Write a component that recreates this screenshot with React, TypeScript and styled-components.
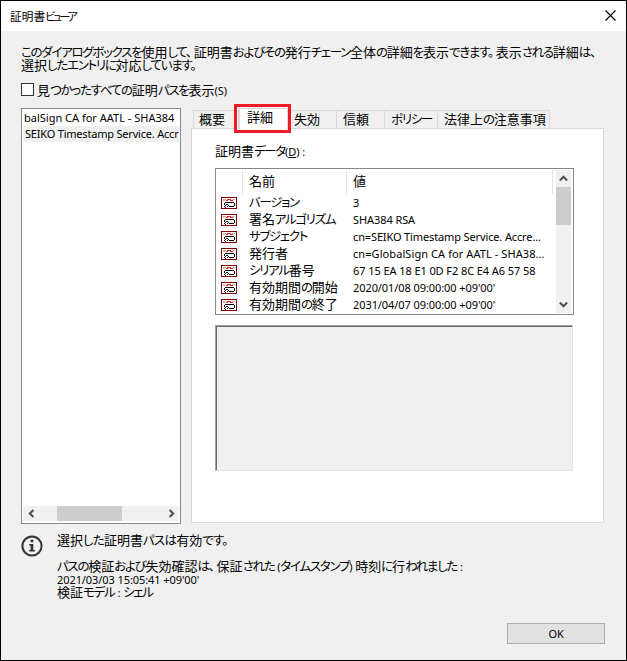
import React from "react";
import styled, { createGlobalStyle } from "styled-components";

const Global = createGlobalStyle`
  *, *::before, *::after { box-sizing: border-box; }
  body { margin: 0; }
`;

const Window = styled.div`
  width: 627px;
  height: 661px;
  border: 1px solid #000;
  background: #f0f0f0;
  color: #000;
  font: 13px/13px "Noto Sans CJK JP", sans-serif;
  display: flex;
  flex-direction: column;
  overflow: hidden;
`;

const Line = styled.div<{ $size?: number }>`
  font-size: ${(p) => p.$size ?? 13}px;
  line-height: 13px;
  height: 13px;
  white-space: pre;
`;

const Kana = styled.span<{ $track: number }>`
  font-size: 0.96em;
  line-height: 1px;
  font-feature-settings: "palt";
  letter-spacing: ${(p) => p.$track}px;
`;

const Stop = styled(Kana)`
  margin-right: 3px;
`;

const Latin = styled.span<{ $track?: number }>`
  font-family: "Noto Sans", "Open Sans", sans-serif;
  font-size: 11px;
  line-height: 1px;
  letter-spacing: ${(p) => p.$track ?? -0.08}px;
`;

/* Kanji keep their full width, kana are set narrower, Latin uses the UI face. */
function Text({ children, track = -1.2 }: { children: string; track?: number }) {
  const runs = children.match(/[、。]|[\u3003-\u30ff]+|[\u4e00-\u9fff]+|[^\u3000-\u30ff\u4e00-\u9fff]+/g) ?? [];
  return (
    <>
      {runs.map((run, i) => {
        if (/[、。]/.test(run)) return <Stop key={i} $track={track}>{run}</Stop>;
        if (/[\u3000-\u30ff]/.test(run)) return <Kana key={i} $track={track}>{run}</Kana>;
        if (/[\u4e00-\u9fff]/.test(run)) return <span key={i}>{run}</span>;
        return <Latin key={i}>{run}</Latin>;
      })}
    </>
  );
}

const TitleBar = styled.header`
  flex: none;
  height: 30px;
  background: #fff;
  display: flex;
  align-items: center;
  justify-content: space-between;
  padding: 0 10px 1px 9px;
`;

const Body = styled.main`
  flex: 1;
  padding: 14px 21px 16px 20px;
  display: flex;
  flex-direction: column;
`;

const CheckRow = styled.label`
  display: flex;
  align-items: center;
  gap: 3px;
  height: 13px;
  margin-top: 12px;
`;

const CheckBox = styled.span`
  width: 13px;
  height: 13px;
  border: 1px solid #333;
  background: #fff;
`;

const Columns = styled.div`
  display: flex;
  gap: 10px;
  margin-top: 8px;
  height: 420px;
  padding-top: 4px;
`;

const Tree = styled.div`
  flex: none;
  width: 160px;
  height: 416px;
  border: 1px solid #828790;
  background: #fff;
  padding: 1px 1px 2px;
  display: flex;
  flex-direction: column;
`;

const TreeRow = styled.div<{ $selected?: boolean }>`
  height: 16px;
  line-height: 14px;
  padding-left: ${(p) => (p.$selected ? 2 : 1)}px;
  background: ${(p) => (p.$selected ? "#f0f0f0" : "#fff")};
  white-space: nowrap;
  overflow: hidden;
`;

const HScroll = styled.div`
  margin-top: auto;
  height: 15px;
  background: #f0f0f0;
  display: flex;
  align-items: center;
`;

const HThumb = styled.div`
  width: 65px;
  height: 15px;
  margin-left: 18px;
  margin-right: auto;
  background: #cdcdcd;
`;

const TabArea = styled.div`
  flex: none;
  width: 413px;
  display: flex;
  flex-direction: column;
`;

const Tabs = styled.div`
  display: flex;
  align-items: flex-end;
  height: 20px;
  padding-left: 2px;
`;

const Tab = styled.div<{ $w: number; $active?: boolean; $first?: boolean }>`
  position: relative;
  z-index: ${(p) => (p.$active ? 1 : 0)};
  flex: none;
  width: ${(p) => p.$w}px;
  height: ${(p) => (p.$active ? 21 : 18)}px;
  margin-bottom: ${(p) => (p.$active ? -1 : 0)}px;
  border: 1px solid #d9d9d9;
  border-bottom: 0;
  border-left-width: ${(p) => (p.$first || p.$active ? 1 : 0)}px;
  background: ${(p) => (p.$active ? "#fff" : "#f0f0f0")};
  padding-top: 1px;
  padding-left: ${(p) => (p.$active ? 7 : p.$first ? 5 : 6)}px;
`;

const Highlight = styled.div`
  position: absolute;
  left: -6px;
  top: -5px;
  width: 57px;
  height: 29px;
  border: 3px solid #ed1c24;
`;

const Panel = styled.section`
  height: 395px;
  border: 1px solid #d9d9d9;
  background: #fff;
  padding: 15px 0 0 23px;
`;

const DataList = styled.div`
  width: 359px;
  height: 147px;
  margin-top: 11px;
  border: 1px solid #828790;
  padding: 1px 2px 1px 1px;
  display: flex;
`;

const Grid = styled.div`
  width: 339px;
`;

const HeaderRow = styled.div`
  display: grid;
  grid-template-columns: 26px 104px 206px;
  height: 24px;
`;

const HeaderCell = styled.div`
  border-right: 1px solid #e5e5e5;
  padding: 4px 0 0 6px;
`;

const DataRow = styled.div`
  display: grid;
  grid-template-columns: 31px 104px 1fr;
  height: 17px;
  align-items: start;
  padding: 1px 0 0 1px;
`;

const IconCell = styled.div`
  height: 14px;
  padding: 2px 0 0 3px;
`;

const VScroll = styled.div`
  width: 15px;
  height: 143px;
  background: #f0f0f0;
  display: flex;
  flex-direction: column;
  align-items: center;
`;

const VThumb = styled.div`
  width: 15px;
  height: 38px;
  margin-bottom: auto;
  background: #cdcdcd;
`;

const ArrowBox = styled.div`
  width: 16px;
  height: 17px;
  display: flex;
  align-items: center;
  justify-content: center;
`;

const Detail = styled.div`
  width: 358px;
  height: 146px;
  margin-top: 10px;
  background: #f0f0f0;
  border: 1px solid #e3e3e3;
  border-top-color: #a0a0a0;
  border-left-color: #a0a0a0;
  box-shadow: inset 1px 1px #696969;
`;

const Status = styled.div`
  display: flex;
  gap: 14px;
  margin-top: 9px;
`;

const InfoSvg = styled.svg`
  flex: none;
  display: block;
  margin-top: 2px;
`;

const Messages = styled.div`
  display: flex;
  flex-direction: column;
`;

const Gap = styled.div`
  height: 13px;
`;

const OkButton = styled.button`
  width: 98px;
  height: 21px;
  margin: auto 0 0 auto;
  padding: 0;
  border: 1px solid #adadad;
  background: #e1e1e1;
  color: #000;
  line-height: 18px;
`;

function Arrow({ rotate }: { rotate: number }) {
  return (
    <svg width="9" height="9" viewBox="0 0 9 9">
      <path d="M.9 6.4 4.5 2.8 8.1 6.4" fill="none" stroke="#505050" strokeWidth="2.1" transform={`rotate(${rotate} 4.5 4.5)`} />
    </svg>
  );
}

function CertIcon() {
  return (
    <svg width="16" height="12" viewBox="0 0 16 12" shapeRendering="crispEdges" display="block">
      <path d="M0 0h16v12H0z" fill="#800000" />
      <path d="M1 1h14v10H1z" fill="#fff" />
      <path d="M2 2h3v1H2zM11 2h3v1h-3zM2 3h2v1H2z" fill="#b8b8b8" />
      <path d="M6 2h4v1H6zM5 3h2v1H5zM9 3h3v1H9z" fill="#f02020" />
      <path d="M4 5h9v1H4zM3 6h1v2H3zM13 6h1v3h-1zM8 9h5v1H8zM5 7h2v1H5zM7 8h1v1H7zM4 8h1v1H4zM3 9h1v1H3zM6 9h1v1H6zM4 10h1v1H4z" fill="#000" />
    </svg>
  );
}

const tabs = [
  { label: "概要", w: 46 },
  { label: "詳細", w: 49, active: true },
  { label: "失効", w: 49 },
  { label: "信頼", w: 48 },
  { label: "ポリシー", w: 53 },
  { label: "法律上の注意事項", w: 112 },
];

const rows = [
  { name: "バージョン", value: "3" },
  { name: "署名アルゴリズム", value: "SHA384 RSA" },
  { name: "サブジェクト", value: "cn=SEIKO Timestamp Service. Accre...", track: -0.13 },
  { name: "発行者", value: "cn=GlobalSign CA for AATL - SHA38...", track: 0.08 },
  { name: "シリアル番号", value: "67 15 EA 18 E1 0D F2 8C E4 A6 57 58" },
  { name: "有効期間の開始", value: "2020/01/08 09:00:00 +09'00'" },
  { name: "有効期間の終了", value: "2031/04/07 09:00:00 +09'00'" },
];

export default function App() {
  return (
    <Window>
      <Global />
      <TitleBar>
        <Line $size={11.7}><Text track={-2.7}>証明書ビューア</Text></Line>
        <svg width="11" height="11" viewBox="0 0 11 11">
          <path d="M.5.5l10 10M10.5.5l-10 10" stroke="#000" strokeWidth="1.1" />
        </svg>
      </TitleBar>
      <Body>
        <Line><Text track={-1.27}>このダイアログボックスを使用して、証明書およびその発行チェーン全体の詳細を表示できます。表示される詳細は、</Text></Line>
        <Line><Text track={-1.25}>選択したエントリに対応しています。</Text></Line>
        <CheckRow>
          <CheckBox />
          <Line><Text track={-1.25}>見つかったすべての証明パスを表示(S)</Text></Line>
        </CheckRow>
        <Columns>
          <Tree>
            <TreeRow><Latin $track={0}>balSign CA for AATL - SHA384</Latin></TreeRow>
            <TreeRow $selected><Latin $track={-0.2}>SEIKO Timestamp Service. Accr</Latin></TreeRow>
            <HScroll>
              <ArrowBox><Arrow rotate={-90} /></ArrowBox>
              <HThumb />
              <ArrowBox><Arrow rotate={90} /></ArrowBox>
            </HScroll>
          </Tree>
          <TabArea>
            <Tabs>
              {tabs.map((t, i) => (
                <Tab key={t.label} $w={t.w} $active={t.active} $first={i === 0}>
                  <Line><Text>{t.label}</Text></Line>
                  {t.active && <Highlight />}
                </Tab>
              ))}
            </Tabs>
            <Panel>
              <Line><Text track={-1.3}>証明書データ</Text><Latin>(<u>D</u>) :</Latin></Line>
              <DataList>
                <Grid>
                  <HeaderRow>
                    <HeaderCell />
                    <HeaderCell><Line>名前</Line></HeaderCell>
                    <HeaderCell><Line>値</Line></HeaderCell>
                  </HeaderRow>
                  {rows.map(({ name, value, track }) => (
                    <DataRow key={name}>
                      <IconCell><CertIcon /></IconCell>
                      <Line><Text track={-1.3}>{name}</Text></Line>
                      <Line><Latin $track={track}>{value}</Latin></Line>
                    </DataRow>
                  ))}
                </Grid>
                <VScroll>
                  <ArrowBox><Arrow rotate={0} /></ArrowBox>
                  <VThumb />
                  <ArrowBox><Arrow rotate={180} /></ArrowBox>
                </VScroll>
              </DataList>
              <Detail />
            </Panel>
          </TabArea>
        </Columns>
        <Status>
          <InfoSvg width="22" height="22" viewBox="0 0 22 22">
            <circle cx="11" cy="11" r="9.6" fill="none" stroke="#333" strokeWidth="2" />
            <path d="M9.6 4.8h2.7v2.5H9.6zM8.2 9h4.1v6h1.5v1.5H8.2V15h1.4v-4.6H8.2z" fill="#333" />
          </InfoSvg>
          <Messages>
            <Line><Text track={-0.75}>選択した証明書パスは有効です。</Text></Line>
            <Gap />
            <Line><Text track={-1.25}>パスの検証および失効確認は、保証された (タイムスタンプ) 時刻に行われました :</Text></Line>
            <Line><Latin>2021/03/03 15:05:41 +09'00'</Latin></Line>
            <Line><Text>検証モデル : シェル</Text></Line>
          </Messages>
        </Status>
        <OkButton><Latin>OK</Latin></OkButton>
      </Body>
    </Window>
  );
}
